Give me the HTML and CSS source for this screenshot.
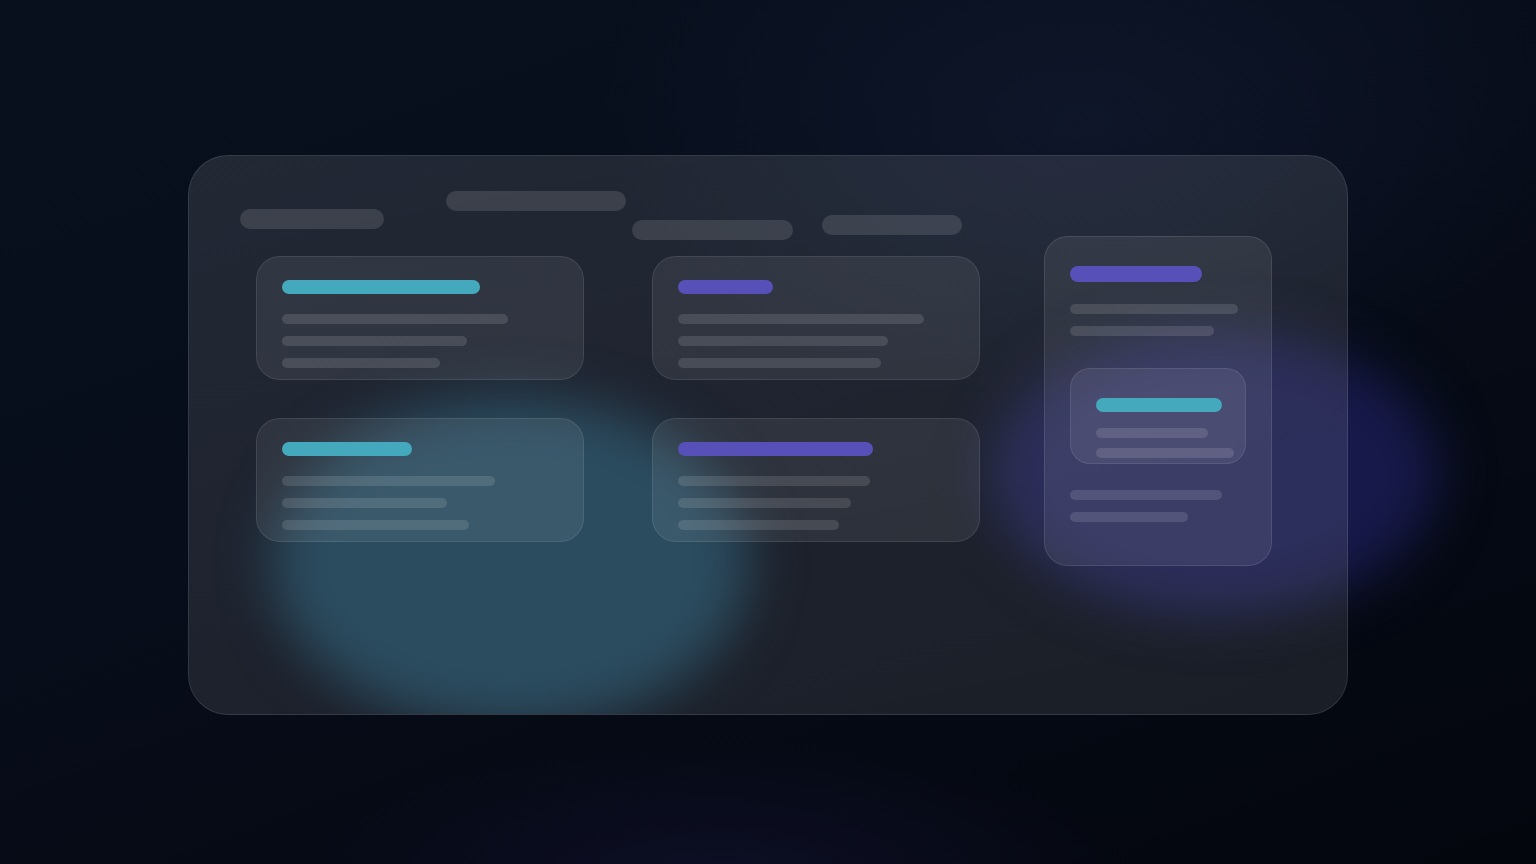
FILE: index.html
```html
<!DOCTYPE html>
<html lang="en">
<head>
<meta charset="utf-8">
<title>Glass skeleton dashboard</title>
<link rel="stylesheet" href="styles.css">
</head>
<body>
<div class="stage">
  <div class="blob blob-purple"></div>
  <div class="panel">
    <div class="blob blob-teal"></div>
    <div class="main">
      <div class="pills">
        <div class="pill pill-1"></div>
        <div class="pill pill-2"></div>
        <div class="pill pill-3"></div>
        <div class="pill pill-4"></div>
      </div>
      <div class="cards">
        <div class="card">
          <div class="bar teal" style="width:198px"></div>
          <div class="lines">
            <div class="line" style="width:226px"></div>
            <div class="line" style="width:185px"></div>
            <div class="line" style="width:158px"></div>
          </div>
        </div>
        <div class="card">
          <div class="bar purple" style="width:95px"></div>
          <div class="lines">
            <div class="line" style="width:246px"></div>
            <div class="line" style="width:210px"></div>
            <div class="line" style="width:203px"></div>
          </div>
        </div>
        <div class="card">
          <div class="bar teal" style="width:130px"></div>
          <div class="lines">
            <div class="line" style="width:213px"></div>
            <div class="line" style="width:165px"></div>
            <div class="line" style="width:187px"></div>
          </div>
        </div>
        <div class="card">
          <div class="bar purple" style="width:195px"></div>
          <div class="lines">
            <div class="line" style="width:192px"></div>
            <div class="line" style="width:173px"></div>
            <div class="line" style="width:161px"></div>
          </div>
        </div>
      </div>
    </div>
    <div class="side">
      <div class="bar purple tall-bar" style="width:132px"></div>
      <div class="lines side-lines">
        <div class="line" style="width:168px"></div>
        <div class="line" style="width:144px"></div>
      </div>
      <div class="inner">
        <div class="bar teal" style="width:126px"></div>
        <div class="lines inner-lines">
          <div class="line" style="width:112px"></div>
          <div class="line" style="width:138px"></div>
        </div>
      </div>
      <div class="lines after-lines">
        <div class="line" style="width:152px"></div>
        <div class="line" style="width:118px"></div>
      </div>
    </div>
  </div>
</div>
</body>
</html>
```
FILE: styles.css
```css
html, body {
  margin: 0;
  padding: 0;
  width: 1536px;
  height: 864px;
  overflow: hidden;
  font-family: "Inter", "Liberation Sans", sans-serif;
}

.stage {
  position: relative;
  width: 1536px;
  height: 864px;
  box-sizing: border-box;
  padding-top: 155px;
  padding-left: 188px;
  background:
    radial-gradient(ellipse 700px 420px at 1080px 120px, rgba(22, 30, 56, 0.5), rgba(22, 30, 56, 0) 70%),
    radial-gradient(ellipse 600px 200px at 720px 880px, rgba(24, 22, 60, 0.45), rgba(24, 22, 60, 0) 70%),
    linear-gradient(160deg, #08101e 0%, #070d1a 45%, #050913 75%, #03060d 100%);
}

.blob {
  position: absolute;
  border-radius: 50%;
  filter: blur(26px);
}

.blob-teal {
  z-index: -1;
  left: 84px;
  top: 242px;
  width: 476px;
  height: 330px;
  background: #2b4c5f;
}

.blob-purple {
  left: 992px;
  top: 332px;
  width: 446px;
  height: 282px;
  background: #17194a;
}

.panel {
  position: relative;
  isolation: isolate;
  overflow: hidden;
  width: 1160px;
  height: 560px;
  box-sizing: border-box;
  border-radius: 40px;
  border: 1px solid rgba(255, 255, 255, 0.1);
  background: linear-gradient(170deg, rgba(255, 255, 255, 0.105), rgba(255, 255, 255, 0.09));
  display: flex;
  align-items: flex-start;
}

.main {
  padding-left: 51px;
  padding-top: 35px;
  width: 792px;
  box-sizing: border-box;
}

.pills {
  display: flex;
  align-items: flex-start;
  height: 49px;
}

.pill {
  height: 20px;
  border-radius: 10px;
  background: rgba(255, 255, 255, 0.12);
}

.pill-1 { width: 144px; margin-top: 18px; }
.pill-2 { width: 180px; margin-left: 62px; }
.pill-3 { width: 161px; margin-left: 6px; margin-top: 29px; }
.pill-4 { width: 140px; margin-left: 29px; margin-top: 24px; }

.cards {
  margin-top: 16px;
  margin-left: 16px;
  display: grid;
  grid-template-columns: 328px 328px;
  column-gap: 68px;
  row-gap: 38px;
}

.card {
  height: 124px;
  box-sizing: border-box;
  padding: 23px 25px 0;
  border-radius: 24px;
  border: 1px solid rgba(255, 255, 255, 0.09);
  background: rgba(255, 255, 255, 0.075);
}

.bar {
  height: 14px;
  border-radius: 7px;
}

.teal { background: #45a9bd; }
.purple { background: #5850b9; }

.lines {
  display: flex;
  flex-direction: column;
  gap: 12px;
  margin-top: 20px;
}

.line {
  height: 10px;
  border-radius: 5px;
  background: rgba(255, 255, 255, 0.12);
}

.side {
  margin-left: 63px;
  margin-top: 80px;
  width: 228px;
  height: 330px;
  box-sizing: border-box;
  padding: 29px 25px 0;
  border-radius: 24px;
  border: 1px solid rgba(255, 255, 255, 0.1);
  background: rgba(255, 255, 255, 0.075);
}

.tall-bar {
  height: 16px;
  border-radius: 8px;
}

.side-lines {
  margin-top: 22px;
}

.inner {
  margin-top: 32px;
  width: 176px;
  height: 96px;
  box-sizing: border-box;
  padding: 29px 12px 0 25px;
  border-radius: 20px;
  border: 1px solid rgba(255, 255, 255, 0.09);
  background: rgba(255, 255, 255, 0.075);
}

.inner-lines {
  margin-top: 16px;
  gap: 10px;
}

.after-lines {
  margin-top: 26px;
}
```
